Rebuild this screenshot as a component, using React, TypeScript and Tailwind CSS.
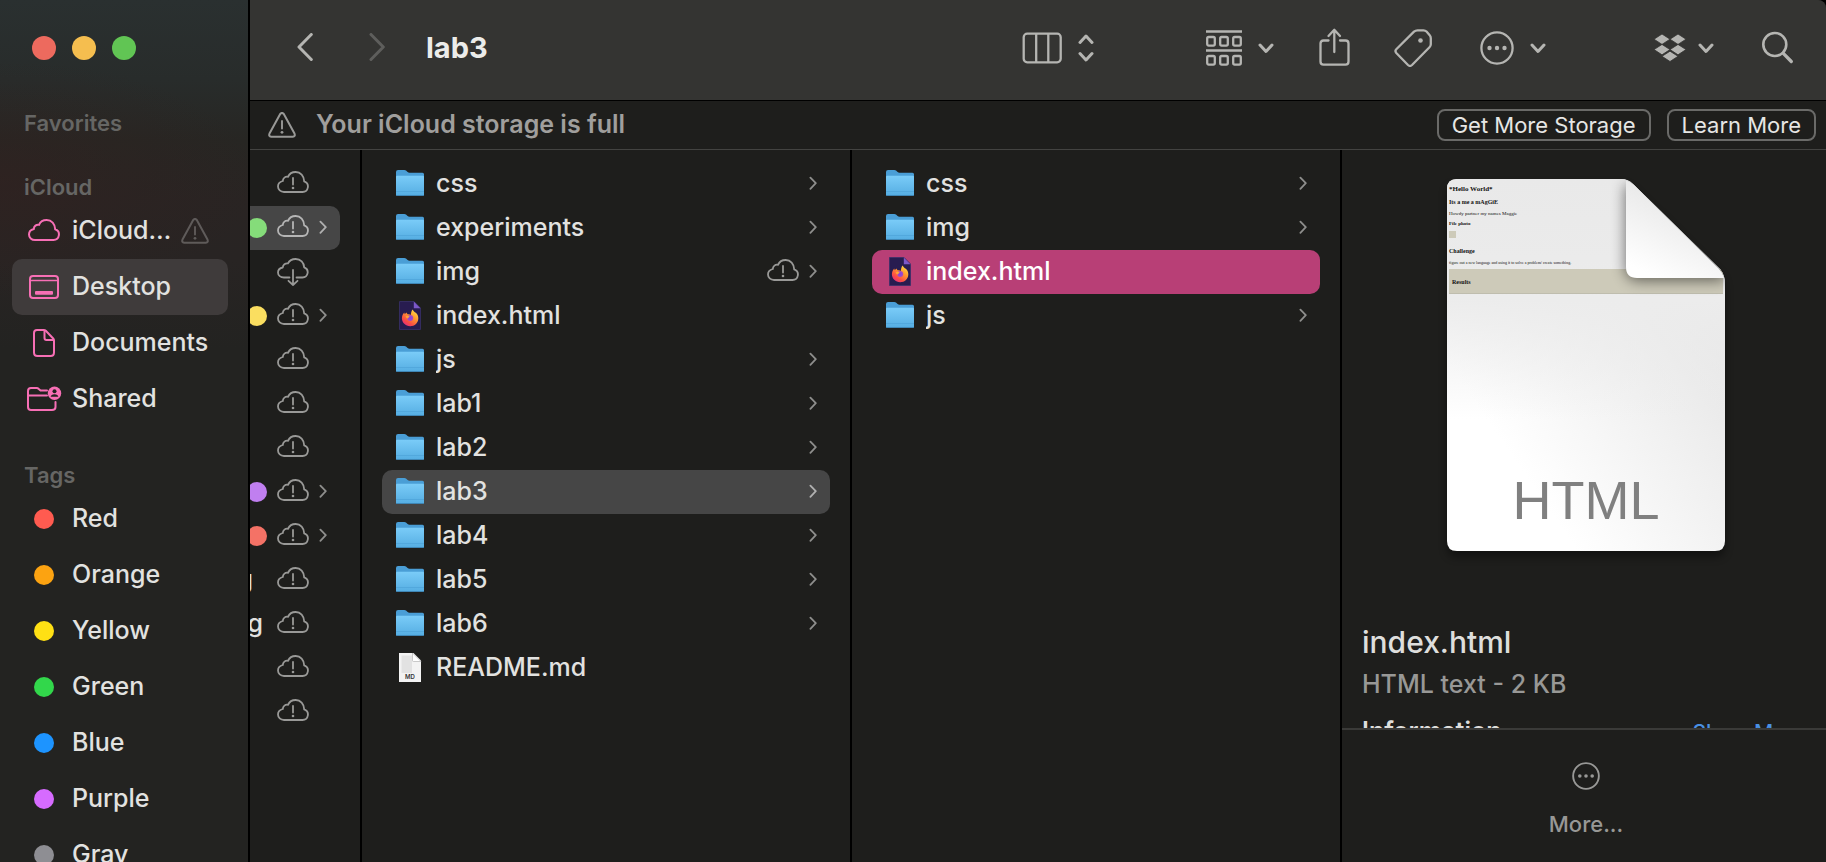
import type { ReactNode } from "react";

type Entry = {
  name: string;
  kind: "folder" | "firefox" | "markdown";
  selected?: "gray" | "pink";
  cloud?: boolean;
};

const labEntries: Entry[] = [
  { name: "css", kind: "folder" },
  { name: "experiments", kind: "folder" },
  { name: "img", kind: "folder", cloud: true },
  { name: "index.html", kind: "firefox" },
  { name: "js", kind: "folder" },
  { name: "lab1", kind: "folder" },
  { name: "lab2", kind: "folder" },
  { name: "lab3", kind: "folder", selected: "gray" },
  { name: "lab4", kind: "folder" },
  { name: "lab5", kind: "folder" },
  { name: "lab6", kind: "folder" },
  { name: "README.md", kind: "markdown" },
];

const lab3Entries: Entry[] = [
  { name: "css", kind: "folder" },
  { name: "img", kind: "folder" },
  { name: "index.html", kind: "firefox", selected: "pink" },
  { name: "js", kind: "folder" },
];

type Clipped = {
  icon: "warn" | "down";
  dot?: string;
  chevron?: boolean;
  selected?: boolean;
  tail?: string;
  tailClass?: string;
};

const clippedEntries: Clipped[] = [
  { icon: "warn" },
  { icon: "warn", dot: "bg-[#85dc7a]", chevron: true, selected: true },
  { icon: "down" },
  { icon: "warn", dot: "bg-[#fade60]", chevron: true },
  { icon: "warn" },
  { icon: "warn" },
  { icon: "warn" },
  { icon: "warn", dot: "bg-[#c07ff0]", chevron: true },
  { icon: "warn", dot: "bg-[#f47266]", chevron: true },
  { icon: "warn", tail: "g", tailClass: "pr-3.5" },
  { icon: "warn", tail: "g", tailClass: "pr-1" },
  { icon: "warn" },
  { icon: "warn" },
];

const tags = [
  { name: "Red", color: "bg-[#ff5b50]" },
  { name: "Orange", color: "bg-[#fca311]" },
  { name: "Yellow", color: "bg-[#ffe014]" },
  { name: "Green", color: "bg-[#32d74b]" },
  { name: "Blue", color: "bg-[#1d94ff]" },
  { name: "Purple", color: "bg-[#d66bff]" },
  { name: "Gray", color: "bg-[#8e8e93]" },
];

const CLOUD =
  "M7 21H25.5A5.5 5.5 0 0 0 27.2 10.3C27 4.8 23.5 1 18.7 1C15.2 1 12.3 2.8 11 5.8C8.3 5.3 5.9 7 5.8 10C2.9 10.7 1 12.7 1 15.5C1 18.6 3.6 21 7 21Z";

function CloudWarning({ className = "text-[#999997]" }: { className?: string }) {
  return (
    <svg width="32" height="26" viewBox="0 0 32 26" fill="none" stroke="currentColor" strokeWidth="1.8" className={`shrink-0 ${className}`}>
      <path d={CLOUD} />
      <path d="M16 7v6.5" strokeLinecap="round" />
      <circle cx="16" cy="17" r="1.3" fill="currentColor" stroke="none" />
    </svg>
  );
}

function CloudDownload() {
  return (
    <svg width="32" height="28" viewBox="0 0 32 28" fill="none" stroke="currentColor" strokeWidth="1.8" strokeLinecap="round" strokeLinejoin="round" className="shrink-0 text-[#999997]">
      <path d="M12.5 19.5H7C3.6 19.5 1 17.5 1 14.5C1 12 2.9 10 5.8 9.5C5.9 6.8 8.3 5 11 5.4C12.3 2.6 15.2 1 18.7 1C23.5 1 27 4.6 27.2 9.4A5.2 5.2 0 0 1 25.5 19.5H19.5" />
      <path d="M16 12v15M11.5 22.8L16 27l4.5-4.2" />
    </svg>
  );
}

function Chevron({ className = "text-[#8e8e8c]" }: { className?: string }) {
  return (
    <svg width="8" height="16" viewBox="0 0 8 16" fill="none" stroke="currentColor" strokeWidth="1.8" strokeLinecap="round" strokeLinejoin="round" className={`shrink-0 ${className}`}>
      <path d="M1.4 1.6L6.8 7.200L1.400 12.800" />
    </svg>
  );
}

function Folder() {
  return (
    <svg width="28" height="28" viewBox="0 0 28 28" className="shrink-0">
      <defs>
        <linearGradient id="folder-front" x1="0" y1="0" x2="0" y2="1">
          <stop offset="0" stopColor="#7accf8" />
          <stop offset="1" stopColor="#55ade2" />
        </linearGradient>
      </defs>
      <path d="M0 2Q0 0 2 0H8.3Q9.3 0 10 .6L11.600 2Q12.300 2.700 13.500 2.700H26.500Q28 2.700 28 4.200V24H0Z" fill="#4a9ed6" />
      <path d="M0 6.600Q0 5.700 1 5.700H27Q28 5.700 28 6.600V24.500Q28 26 26.500 26H1.500Q0 26 0 24.500Z" fill="url(#folder-front)" />
      <path d="M0 21.500H28" stroke="#4fa5da" strokeWidth="0.800" />
      <path d="M.4 25.500H27.600" stroke="#3f86b5" strokeWidth="1" />
    </svg>
  );
}

function FirefoxDoc() {
  return (
    <svg width="28" height="30" viewBox="0 0 28 30" className="shrink-0">
      <defs>
        <linearGradient id="fx-flame" x1="1" y1="0" x2="0.300" y2="1">
          <stop offset="0" stopColor="#fff04a" />
          <stop offset="0.450" stopColor="#ff9a2e" />
          <stop offset="0.800" stopColor="#fb4c45" />
          <stop offset="1" stopColor="#e6307a" />
        </linearGradient>
        <radialGradient id="fx-core">
          <stop offset="0" stopColor="#7f45e0" />
          <stop offset="1" stopColor="#a84ac0" />
        </radialGradient>
      </defs>
      <path d="M3.500 .500H18L24.500 7V28.500H3.500Z" fill="#281c50" stroke="#38306a" strokeWidth="0.800" />
      <path d="M17.800 .500V7.200H24.500Z" fill="#7c58c8" />
      <path d="M16.600 8.500C17.300 10.200 18.600 11 19.800 11.700C21.300 12.800 22.300 14.800 22.300 17.200C22.300 21.700 18.800 25.200 14.200 25.200C9.600 25.200 5.900 21.700 5.900 17.300C5.900 15 6.900 13 8.200 11.500L8.800 13.300L10.300 11.600L11.600 13.300C12.800 13 14 13.300 14.800 14C15 12.500 15.200 10.200 16.600 8.500Z" fill="url(#fx-flame)" />
      <circle cx="14.200" cy="17" r="3" fill="url(#fx-core)" />
      <path d="M9.600 15.200C11 14.300 12.800 14.600 13.800 15.800C12.700 16 12.500 17 11.600 17.400C10.700 17.300 9.800 16.400 9.600 15.200Z" fill="#ffa436" />
    </svg>
  );
}

function MarkdownDoc() {
  return (
    <svg width="28" height="30" viewBox="0 0 28 30" className="shrink-0">
      <path d="M3 0H17.500L25 7.500V29H3Z" fill="#f3f3f3" />
      <path d="M5.500 2.500H16V20H5.500Z" fill="#e2e2e2" />
      <path d="M16.500 0L25 8.500H17.500Q16.500 8.500 16.500 7.500Z" fill="#fff" stroke="#b5b5b5" strokeWidth="0.700" />
      <text x="14" y="26" textAnchor="middle" fontSize="6" fontWeight="600" fontFamily="Inter, sans-serif" fill="#333">MD</text>
    </svg>
  );
}

function Warning({ className }: { className: string }) {
  return (
    <svg width="28" height="26" viewBox="0 0 28 26" fill="none" stroke="currentColor" strokeWidth="2" strokeLinecap="round" strokeLinejoin="round" className={`shrink-0 ${className}`}>
      <path d="M12.200 2Q14 -.2 15.800 2L26.500 21.500Q27.600 24.500 24.800 24.800H3.200Q.4 24.500 1.500 21.500Z" />
      <path d="M14 9v7.500" strokeWidth="1.900" />
      <circle cx="14" cy="20.300" r="1.400" fill="currentColor" stroke="none" />
    </svg>
  );
}

function FileRow({ entry }: { entry: Entry }) {
  const bg = entry.selected === "gray" ? "bg-[#464646]" : entry.selected === "pink" ? "bg-[#b83f76] text-white" : "";
  return (
    <li>
      <button type="button" className={`flex h-11 w-full items-center rounded-[10px] pr-[13px] pl-3.5 text-left ${bg}`}>
        {entry.kind === "folder" && <Folder />}
        {entry.kind === "firefox" && <FirefoxDoc />}
        {entry.kind === "markdown" && <MarkdownDoc />}
        <span className="ml-3 flex-1 truncate">{entry.name}</span>
        <span className="flex items-center gap-2.5">
          {entry.cloud && <CloudWarning />}
          {entry.kind === "folder" && <Chevron className={entry.selected ? "text-[#b0b0b0]" : "text-[#8e8e8c]"} />}
        </span>
      </button>
    </li>
  );
}

function FileColumn({ label, entries }: { label: string; entries: Entry[] }) {
  return (
    <ul aria-label={label} className="min-w-0 border-r-2 border-black px-5 pt-3">
      {entries.map((e) => (
        <FileRow key={e.name} entry={e} />
      ))}
    </ul>
  );
}

function SideItem({ icon, label, active, trailing }: { icon: ReactNode; label: string; active?: boolean; trailing?: ReactNode }) {
  return (
    <li>
      <a href="#" className={`flex h-14 items-center rounded-[10px] pr-[19px] pl-3.5 ${active ? "bg-[#3f3b3b]" : ""}`}>
        <span className="flex w-9 shrink-0 justify-center text-[#f76fb5]">{icon}</span>
        <span className="ml-2.5 flex-1 whitespace-nowrap">{label}</span>
        {trailing}
      </a>
    </li>
  );
}

function SideHeader({ children, className }: { children: ReactNode; className: string }) {
  return <h2 className={`flex h-8 items-center pl-3 text-[22px] font-semibold text-[#666664] ${className}`}>{children}</h2>;
}

function DownChevron() {
  return (
    <svg width="16" height="12" viewBox="0 0 16 12" fill="none" stroke="currentColor" strokeWidth="3" strokeLinecap="round" strokeLinejoin="round">
      <path d="M2 3L8 9.500L14 3" />
    </svg>
  );
}

function MoreCircle({ size }: { size: 28 | 34 }) {
  return (
    <svg width={size} height={size} viewBox="0 0 34 34" fill="none" stroke="currentColor" strokeWidth="2.300">
      <circle cx="17" cy="17" r="15.600" />
      <g fill="currentColor" stroke="none">
        <circle cx="9.500" cy="17" r="2.200" />
        <circle cx="17" cy="17" r="2.200" />
        <circle cx="24.500" cy="17" r="2.200" />
      </g>
    </svg>
  );
}

function ToolButton({ label, className = "", children }: { label: string; className?: string; children: ReactNode }) {
  return (
    <button type="button" aria-label={label} className={`flex shrink-0 items-center gap-4 text-[#b5b5b2] ${className}`}>
      {children}
    </button>
  );
}

function Toolbar() {
  return (
    <header className="flex h-[101px] items-center border-b border-black bg-[#343432] pr-8 pb-1 pl-[47px]">
      <ToolButton label="Back">
        <svg width="16" height="30" viewBox="0 0 16 30" fill="none" stroke="currentColor" strokeWidth="3" strokeLinecap="round" strokeLinejoin="round">
          <path d="M14.300 1.500L2 14L14.300 26.500" />
        </svg>
      </ToolButton>
      <ToolButton label="Forward" className="ml-14 !text-[#5e5e5c]">
        <svg width="16" height="30" viewBox="0 0 16 30" fill="none" stroke="currentColor" strokeWidth="3" strokeLinecap="round" strokeLinejoin="round">
          <path d="M2 1.500L14.300 14L2 26.500" />
        </svg>
      </ToolButton>
      <h1 className="ml-[41px] flex-1 text-[29px] font-bold text-[#ececea]">lab3</h1>
      <ToolButton label="Column view">
        <svg width="40" height="32" viewBox="0 0 40 32" fill="none" stroke="currentColor" strokeWidth="2.300">
          <rect x="1.700" y="1.700" width="37" height="28.600" rx="3.500" />
          <path d="M14.200 2v28M26.300 2v28" />
        </svg>
        <svg width="16" height="28" viewBox="0 0 16 28" fill="none" stroke="currentColor" strokeWidth="3" strokeLinecap="round" strokeLinejoin="round">
          <path d="M2 8.500L8 2L14 8.500M2 19.500L8 26L14 19.500" />
        </svg>
      </ToolButton>
      <ToolButton label="Group items" className="ml-28">
        <svg width="36" height="36" viewBox="0 0 36 36" fill="none" stroke="currentColor" strokeWidth="2.300">
          <path d="M0 1.500H36M0 20.500H36" />
          <rect x="1.200" y="7" width="7.600" height="8.600" rx="1.500" />
          <rect x="14.200" y="7" width="7.600" height="8.600" rx="1.500" />
          <rect x="27.200" y="7" width="7.600" height="8.600" rx="1.500" />
          <rect x="1.200" y="26" width="7.600" height="8.600" rx="1.500" />
          <rect x="14.200" y="26" width="7.600" height="8.600" rx="1.500" />
          <rect x="27.200" y="26" width="7.600" height="8.600" rx="1.500" />
        </svg>
        <DownChevron />
      </ToolButton>
      <ToolButton label="Share" className="ml-11">
        <svg width="32" height="40" viewBox="0 0 32 40" fill="none" stroke="currentColor" strokeWidth="2.300" strokeLinecap="round" strokeLinejoin="round">
          <path d="M10.500 12.500H5.500Q2.500 12.500 2.500 15.500V33.500Q2.500 36.700 5.500 36.700H27.500Q30.500 36.700 30.500 33.500V15.500Q30.500 12.500 27.500 12.500H22" />
          <path d="M16.300 24V2M10.500 8L16.300 1.800L22 8" />
        </svg>
      </ToolButton>
      <ToolButton label="Edit tags" className="ml-11">
        <svg width="38" height="38" viewBox="0 0 38 38" fill="none" stroke="currentColor" strokeWidth="2.300" strokeLinejoin="round">
          <path d="M20 2.600Q21.500 1.300 23.500 1.300H29.500Q31.300 1.300 32.500 2.500L35.700 6.200Q36.800 7.500 36.800 9.200V15.300Q36.800 17 35.500 18.300L18 36Q16 37.800 14 36L2.300 24Q.6 22 2.300 20.200Z" />
          <circle cx="26.500" cy="11.500" r="2.300" fill="currentColor" stroke="none" />
        </svg>
      </ToolButton>
      <ToolButton label="More actions" className="ml-12">
        <MoreCircle size={34} />
        <DownChevron />
      </ToolButton>
      <ToolButton label="Dropbox" className="ml-[108px] !gap-3">
        <svg width="32" height="28" viewBox="0 0 32 28" fill="currentColor">
          <path d="M8 0L16 5.200L8 10.400L0 5.200ZM24 0L32 5.200L24 10.400L16 5.200ZM8 10.400L16 15.600L8 20.800L0 15.600ZM24 10.400L32 15.600L24 20.800L16 15.600ZM16 17.200L24 22.300L16 27.500L8 22.300Z" stroke="#343432" strokeWidth="0.800" />
        </svg>
        <DownChevron />
      </ToolButton>
      <ToolButton label="Search" className="ml-12">
        <svg width="32" height="34" viewBox="0 0 32 34" fill="none" stroke="currentColor" strokeWidth="2.600" strokeLinecap="round">
          <circle cx="12.800" cy="13.500" r="11.500" />
          <path d="M21.300 22.300L29.300 30.500" strokeWidth="3.300" />
        </svg>
      </ToolButton>
    </header>
  );
}

function Banner() {
  return (
    <div className="flex h-[49px] items-center border-b border-[#434341] pr-2.5 pl-[18px]">
      <Warning className="text-[#999997]" />
      <p className="ml-5 flex-1 text-[25px] font-semibold text-[#a09f9d]">Your iCloud storage is full</p>
      <button type="button" className="h-8 rounded-lg border-2 border-[#6a6a68] px-[13px] text-[22px] leading-7 font-normal text-[#e6e6e4]">Get More Storage</button>
      <button type="button" className="ml-4 h-8 rounded-lg border-2 border-[#6a6a68] px-[13px] text-[22px] leading-7 font-normal text-[#e6e6e4]">Learn More</button>
    </div>
  );
}

function HtmlDocument() {
  const serif = "'Liberation Serif', serif";
  const page = "M10 0H174Q181 0 186 5L273 90Q278 96 278 105V362Q278 372 268 372H10Q0 372 0 362V10Q0 0 10 0Z";
  return (
    <svg width="278" height="372" viewBox="0 0 278 372" className="ml-1 shrink-0 overflow-visible" role="img" aria-label="index.html preview">
      <defs>
        <linearGradient id="page" gradientUnits="userSpaceOnUse" x1="278" y1="120" x2="60" y2="270">
          <stop offset="0" stopColor="#e4e4e4" />
          <stop offset="1" stopColor="#ffffff" />
        </linearGradient>
        <linearGradient id="page-top" x1="0" y1="0" x2="0" y2="1">
          <stop offset="0" stopColor="#e9e9e9" />
          <stop offset="0.500" stopColor="#ececec" />
          <stop offset="1" stopColor="#ececec" stopOpacity="0" />
        </linearGradient>
        <linearGradient id="fold" x1="0.700" y1="0.200" x2="0.300" y2="1">
          <stop offset="0" stopColor="#e6e6e6" />
          <stop offset="1" stopColor="#ffffff" />
        </linearGradient>
        <clipPath id="page-clip">
          <path d={page} />
        </clipPath>
        <filter id="soft" x="-50%" y="-50%" width="200%" height="200%">
          <feGaussianBlur stdDeviation="7" />
        </filter>
        <filter id="drop" x="-10%" y="-10%" width="120%" height="120%">
          <feGaussianBlur stdDeviation="4" />
        </filter>
      </defs>
      <path d={page} fill="#000" opacity="0.400" transform="translate(0 6)" filter="url(#drop)" />
      <path d={page} fill="url(#page)" />
      <g clipPath="url(#page-clip)">
        <rect width="278" height="240" fill="url(#page-top)" />
        <rect x="2" y="90" width="274" height="25" fill="#cdcab9" />
        <path d="M2 114.500H276" stroke="#b5b3a6" strokeWidth="0.600" />
        <rect x="2" y="52" width="7" height="7" fill="#cdcab9" />
        <path d="M178 6V90Q180 102 192 102H278V92L188 6Z" fill="#000" opacity="0.500" filter="url(#soft)" />
      </g>
      <g fontFamily={serif} fill="#111">
        <g fontWeight="700">
          <text x="2" y="12" fontSize="7">*Hello World*</text>
          <text x="2" y="25" fontSize="6">Its a me a mAgGiE</text>
          <text x="2" y="46" fontSize="5">File photo</text>
          <text x="2" y="74" fontSize="6">Challenge</text>
          <text x="5" y="105" fontSize="6">Results</text>
        </g>
        <g fontWeight="400">
          <text x="2" y="36" fontSize="5">Howdy partner my names Maggie</text>
          <text x="2" y="85" fontSize="4">figure out a new language and using it to solve a problem/ create something.</text>
        </g>
      </g>
      <path d="M179 1.500Q184 3 187 6L272 90Q276 94 277 99H190Q179 99 179 88Z" fill="url(#fold)" />
      <text x="139" y="340" textAnchor="middle" fontSize="54" fontWeight="400" fontFamily="'Liberation Sans', sans-serif" fill="#808080">HTML</text>
    </svg>
  );
}

function Preview() {
  return (
    <section aria-label="Preview" className="flex min-h-0 min-w-0 flex-col">
      <div className="flex min-h-0 flex-1 flex-col items-center overflow-hidden px-5 pt-[29px]">
        <HtmlDocument />
        <h2 className="mt-[73px] w-full shrink-0 text-[30px] leading-9 text-[#dededc]">index.html</h2>
        <p className="mt-2 w-full shrink-0 leading-8 text-[#989896]">HTML text - 2 KB</p>
        <div className="mt-[15px] flex w-full shrink-0 items-baseline justify-between">
          <h3 className="leading-8 font-semibold text-[#dededc]">Information</h3>
          <a href="#" className="text-[21px] leading-8 text-[#4a90e2]">Show More</a>
        </div>
      </div>
      <div className="flex h-[134px] flex-col items-center border-t-2 border-[#3a3a38] pt-8 pl-1">
        <button type="button" className="flex flex-col items-center gap-5 text-[22px] leading-7 text-[#989896]">
          <MoreCircle size={28} />
          More...
        </button>
      </div>
    </section>
  );
}

function Sidebar() {
  return (
    <nav
      aria-label="Sidebar"
      className="w-[250px] shrink-0 overflow-hidden border-r-2 border-black bg-[#232321] bg-[radial-gradient(ellipse_260px_120px_at_0px_180px,#33211f88,transparent),linear-gradient(to_bottom,#2a3030_0px,#282c2b_80px,#272623_140px,#292423_200px,#282423_260px,#232321_350px)] pt-9 pr-5 pl-3"
    >
      <div className="flex gap-4 pl-5">
        <button type="button" aria-label="Close" className="size-6 rounded-full bg-[#ed6a5e]" />
        <button type="button" aria-label="Minimize" className="size-6 rounded-full bg-[#f5be4f]" />
        <button type="button" aria-label="Zoom" className="size-6 rounded-full bg-[#61c554]" />
      </div>
      <SideHeader className="mt-[47px]">Favorites</SideHeader>
      <SideHeader className="mt-8">iCloud</SideHeader>
      <ul>
        <SideItem
          label="iCloud…"
          trailing={<Warning className="text-[#5f5b5a]" />}
          icon={
            <svg width="32" height="24" viewBox="0 0 32 24" fill="none" stroke="currentColor" strokeWidth="2">
              <path d={CLOUD} />
            </svg>
          }
        />
        <SideItem
          label="Desktop"
          active
          icon={
            <svg width="30" height="24" viewBox="0 0 30 24" fill="none" stroke="currentColor" strokeWidth="2">
              <rect x="1" y="1" width="28" height="22" rx="3" />
              <path d="M1 5.500H29" strokeWidth="1.500" />
              <rect x="6" y="16" width="18" height="3.800" rx="1" fill="currentColor" stroke="none" />
            </svg>
          }
        />
        <SideItem
          label="Documents"
          icon={
            <svg width="22" height="28" viewBox="0 0 22 28" fill="none" stroke="currentColor" strokeWidth="2" strokeLinejoin="round">
              <path d="M4 1H10.800Q12 1 12.800 1.800L20.200 9.500Q21 10.300 21 11.500V23.500Q21 27 17.500 27H4.500Q1 27 1 23.500V4Q1 1 4 1Z" />
              <path d="M11.500 1.500V9Q11.500 11 13.500 11H20.500" />
            </svg>
          }
        />
        <SideItem
          label="Shared"
          icon={
            <svg width="36" height="26" viewBox="0 0 36 26" fill="none" stroke="currentColor" strokeWidth="2" strokeLinecap="round">
              <path d="M21 4.500H14.500L12.500 2.700Q11.800 2 10.800 2H5Q2 2 2 5V21Q2 24 5 24H26Q29.500 24 29.500 21V16" />
              <path d="M2 9.500H21" />
              <circle cx="28.500" cy="7.200" r="6.700" fill="currentColor" stroke="none" />
              <circle cx="28.500" cy="5.200" r="2" fill="#232321" stroke="none" />
              <path d="M24.700 10.800Q25 8.300 28.500 8.300T32.300 10.800Z" fill="#232321" stroke="none" />
            </svg>
          }
        />
      </ul>
      <SideHeader className="mt-8">Tags</SideHeader>
      <ul>
        {tags.map((t) => (
          <SideItem key={t.name} label={t.name} icon={<span className={`size-5 rounded-full ${t.color}`} />} />
        ))}
      </ul>
    </nav>
  );
}

export default function App() {
  return (
    <div className="h-screen overflow-hidden bg-black font-['Inter',sans-serif] text-[25px] font-medium text-[#e2e2e0]">
      <div className="flex h-full overflow-hidden rounded-tr-lg">
        <Sidebar />
        <main className="flex min-w-0 flex-1 flex-col bg-[#1e1e1c]">
          <Toolbar />
          <Banner />
          <div className="grid min-h-0 flex-1 grid-cols-[112px_490fr_490fr_484fr]">
            <ul aria-label="Parent folder" className="overflow-hidden border-r-2 border-black pt-3">
              {clippedEntries.map((c, i) => (
                <li key={i} className={`mr-5 flex h-11 items-center justify-end gap-2.5 pr-[13px] ${c.selected ? "rounded-r-[10px] bg-[#464646]" : ""}`}>
                  {c.dot && <span className={`size-5 shrink-0 rounded-full ${c.dot}`} />}
                  {c.tail && <span className={c.tailClass}>{c.tail}</span>}
                  {c.icon === "warn" ? <CloudWarning className={c.selected ? "text-[#b5b5b5]" : "text-[#999997]"} /> : <CloudDownload />}
                  <span className="w-2 shrink-0">{c.chevron && <Chevron className={c.selected ? "text-[#b0b0b0]" : "text-[#8e8e8c]"} />}</span>
                </li>
              ))}
            </ul>
            <FileColumn label="Labs" entries={labEntries} />
            <FileColumn label="lab3" entries={lab3Entries} />
            <Preview />
          </div>
        </main>
      </div>
    </div>
  );
}
